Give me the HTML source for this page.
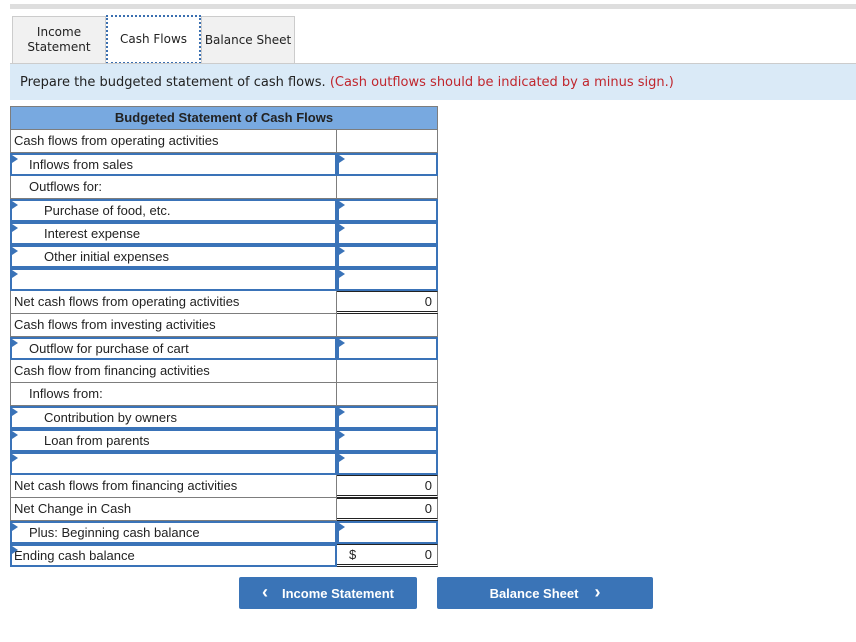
<!DOCTYPE html>
<html><head><meta charset="utf-8"><style>
body{margin:0;width:856px;height:642px;background:#fff;position:relative;overflow:hidden;font-family:"Liberation Sans",Arial,sans-serif;}
.a{position:absolute;box-sizing:border-box;}
.tab{font-family:"DejaVu Sans","Liberation Sans",sans-serif;font-size:12px;color:#222;text-align:center;display:flex;align-items:center;justify-content:center;line-height:15px;}
.c{font-size:13px;color:#222;line-height:21px;white-space:nowrap;overflow:hidden;}
.tri{position:absolute;left:0;top:0;width:0;height:0;border-top:4px solid transparent;border-bottom:4px solid transparent;border-left:6px solid #3a73b8;}
.btn{background:#3a74b7;color:#fff;font-weight:bold;font-size:13px;display:flex;align-items:center;justify-content:center;border-radius:2px;}
</style></head><body>
<div class="a" style="left:10px;top:4px;width:846px;height:5px;background:#dedede"></div>
<div class="a tab" style="left:12px;top:16px;width:94px;height:47px;background:#f1f1f1;border:1px solid #ccc;border-bottom:none">Income<br>Statement</div>
<div class="a tab" style="left:106px;top:15px;width:95px;height:49px;background:#fff;border:2px dotted #3a6fb0">Cash Flows</div>
<div class="a tab" style="left:201px;top:16px;width:94px;height:47px;background:#f1f1f1;border:1px solid #ccc;border-bottom:none">Balance Sheet</div>
<div class="a" style="left:10px;top:63px;width:846px;height:1px;background:#ccc"></div>
<div class="a" style="left:10px;top:64px;width:846px;height:36px;background:#daeaf7;font-family:'DejaVu Sans','Liberation Sans',sans-serif;font-size:13px;color:#222;padding:11px 0 0 10px;white-space:nowrap">Prepare the budgeted statement of cash flows. <span style="color:#c0262d">(Cash outflows should be indicated by a minus sign.)</span></div>
<div class="a" style="left:10px;top:106px;width:428px;height:24px;background:#78a9e0;border:1px solid #7d7d7d;font-weight:bold;font-size:13px;color:#222;text-align:center;line-height:22px">Budgeted Statement of Cash Flows</div>
<div id="t"></div>
<div class="a btn" style="left:239px;top:577px;width:178px;height:32px"><span style="margin-right:14px;font-size:18px;margin-top:-2px">&#8249;</span>Income Statement</div>
<div class="a btn" style="left:437px;top:577px;width:216px;height:32px">Balance Sheet<span style="margin-left:16px;font-size:18px;margin-top:-2px">&#8250;</span></div>
<script>
var rows=[["Cash flows from operating activities",0,0],["Inflows from sales",1,1],["Outflows for:",1,0],["Purchase of food, etc.",2,1],["Interest expense",2,1],["Other initial expenses",2,1],["",0,1],["Net cash flows from operating activities",0,2,"0"],["Cash flows from investing activities",0,0],["Outflow for purchase of cart",1,1],["Cash flow from financing activities",0,0],["Inflows from:",1,0],["Contribution by owners",2,1],["Loan from parents",2,1],["",0,1],["Net cash flows from financing activities",0,2,"0"],["Net Change in Cash",0,2,"0"],["Plus: Beginning cash balance",1,1],["Ending cash balance",0,3,"0"]];
var h="";
for(var i=0;i<rows.length;i++){var r=rows[i],y=130+i*23,pad=3+r[1]*15;
var inp=r[2]==1||r[2]==3;
var lb=inp?"2px solid #3a73b8":"1px solid #7d7d7d";
h+='<div class="a c" style="left:10px;top:'+y+'px;width:327px;height:23px;border:'+lb+';border-top:'+(inp?'2px solid #3a73b8':'0')+';padding-left:'+(pad-(inp?1:0))+'px;line-height:'+(inp?20:22)+'px">'+(inp?'<div class="tri"></div>':'')+r[0]+'</div>';
if(r[2]==1){h+='<div class="a" style="left:337px;top:'+y+'px;width:101px;height:23px;border:2px solid #3a73b8"><div class="tri"></div></div>';}
else if(r[2]==0){h+='<div class="a" style="left:337px;top:'+y+'px;width:101px;height:23px;border-right:1px solid #7d7d7d;border-bottom:1px solid #7d7d7d"></div>';}
else{h+='<div class="a c" style="left:337px;top:'+y+'px;width:101px;height:23px;border-right:1px solid #7d7d7d;border-top:1px solid #222;border-bottom:3px double #222;text-align:right;padding-right:5px;line-height:20px">'+(r[2]==3?'<span style="position:absolute;left:12px">$</span>':'')+r[3]+'</div>';}
}
document.getElementById("t").innerHTML=h;
</script>
</body></html>
